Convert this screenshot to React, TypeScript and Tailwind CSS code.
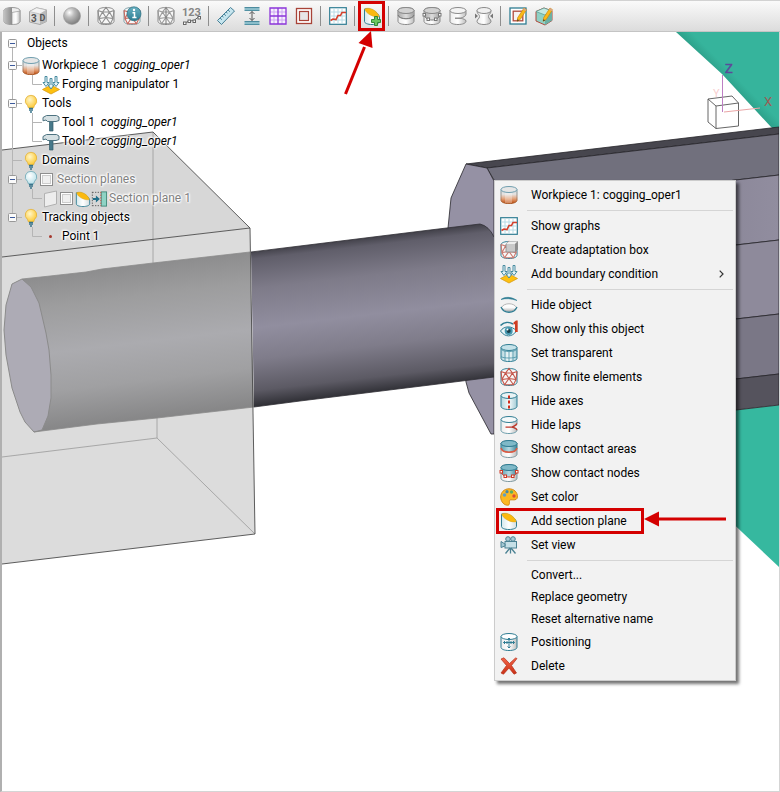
import { Fragment } from "react";
import type { ReactNode } from "react";

const TEAL = "#2f7d93";
const GREY = "#8a8a8a";
const RED = "#c0392b";

/* ---------- Icon building blocks ---------- */

function Can({ stroke = TEAL, fill = "url(#canTeal)", top = "#e9f3f5" }: { stroke?: string; fill?: string; top?: string }) {
  return (
    <>
      <path d="M1 3.500v10.800c0 1.800 3.200 3.200 8 3.200s8-1.400 8-3.200V3.500z" fill={fill} stroke={stroke} />
      <ellipse cx="9" cy="3.500" rx="8" ry="3" fill={top} stroke={stroke} />
    </>
  );
}

function Mesh({ stroke, line }: { stroke: string; line: string }) {
  return (
    <>
      <path d="M1 3.500v10.800c0 1.800 3.200 3.200 8 3.200s8-1.400 8-3.200V3.500C16.500 1.500 13 .5 9 .5s-7.500 1-8 3z" fill="#f7f7f7" stroke={stroke} />
      <path
        d="M1 3.500 5.500 5 9 .5 12.500 5 17 3.500M5.500 5h7L9 10.500zM5.500 5 2 11.500 9 10.500l7 1L12.500 5M2 11.500l2.500 5.200L9 10.500l4.500 6.200L16 11.500M1 3.500l1 8M17 3.500l-1 8M4.500 16.700h9"
        fill="none"
        stroke={line}
        strokeWidth="1.100"
      />
    </>
  );
}

function Section() {
  return (
    <>
      <path d="M1.500 2v12.500c0 1.700 3.200 3 7.500 3s7.500-1.300 7.500-3V10C15.500 6 8 .5 1.500 2z" fill="url(#canSection)" stroke={TEAL} />
      <path d="M1.700 2C7-.8 15 4.500 16.200 9.700 11.500 10.800 3.500 7.500 1.700 2z" fill="#fbb90f" stroke="#d9a520" strokeWidth=".5" />
    </>
  );
}

function Pencil() {
  return (
    <>
      <path d="m15 1 2.500 1.800-6.300 9.700-3 1.800.4-3.500z" fill="#fbb917" stroke="#c98a12" strokeWidth=".7" />
      <path d="m8.300 14.200.2-2 1.500 1z" fill="#222" />
      <path d="m15 1 2.500 1.800-1 1.500L14 2.500z" fill="#d9a58a" />
    </>
  );
}

function Nodes({ color }: { color: string }) {
  return (
    <>
      <path d="M1.500 8c0 2.500 3 5 7.500 5s7.500-2.500 7.500-5" fill="none" stroke={color} />
      <g fill="#fff" stroke={color}>
        <rect x="0" y="6.500" width="2.500" height="2.500" />
        <rect x="15.500" y="6.500" width="2.500" height="2.500" />
        <rect x="4" y="11" width="2.500" height="2.500" />
        <rect x="11.500" y="11" width="2.500" height="2.500" />
      </g>
    </>
  );
}

const lapPath =
  "M1 3.500v10.800c0 1.800 3.200 3.200 8 3.200s8-1.400 8-3.400c0-2-2.800-1.800-5-3 2.200-1 5-1.600 5-4V3.500z";

const ICONS = {
  halfCan: (
    <>
      <Can stroke="#999" fill="url(#canGrey)" top="#eee" />
      <path d="M1 3.500C1.500 1.500 5 .5 9 .5v17c-4.800 0-8-1.400-8-3.200z" fill="url(#canDark)" />
      <path d="M9 5.500 17 4v10.300c0 1.800-3.500 3.200-8 3.200z" fill="url(#canLight)" stroke="#999" strokeWidth=".7" />
    </>
  ),
  cube3d: (
    <>
      <path d="M.5 4.500 7.500.8l10 2.200v11.500L11 17.500.5 15z" fill="#dcdcdc" stroke="#a5a5a5" />
      <path d="m.5 4.500 7-3.700 10 2.200L11 7z" fill="#f3f3f3" stroke="#b0b0b0" strokeWidth=".6" />
      <path d="m11 7 6.500-4v11.500L11 17.500z" fill="#b9b9b9" />
      <text x="2" y="14.500" fontSize="10" fontWeight="700" fill="#555">3</text>
      <text x="10.500" y="14" fontSize="9" fontWeight="700" fill="#555">D</text>
    </>
  ),
  sphere: <circle cx="9" cy="9" r="8.500" fill="url(#ball)" stroke="#999" strokeWidth=".6" />,
  meshGrey: <Mesh stroke={GREY} line="#8f8f8f" />,
  meshInfo: (
    <>
      <Mesh stroke="#7d9fa8" line="#c7685e" />
      <circle cx="11" cy="6.800" r="7" fill="url(#info)" stroke="#286f81" strokeWidth=".7" />
      <path d="M9.500 5.800h2V10M9.300 10.500h4.200" stroke="#fff" strokeWidth="1.500" fill="none" />
      <circle cx="11" cy="3" r="1.200" fill="#fff" />
    </>
  ),
  meshSplit: (
    <>
      <Mesh stroke={GREY} line="#9a9a9a" />
      <path d="M9 .5v17" stroke="#777" fill="none" />
    </>
  ),
  numbers: (
    <>
      <text x="-1" y="8.500" fontSize="11" fontWeight="700" fill="#858585">123</text>
      <path d="m2 16 4-2 5-.5 5-4" fill="none" stroke="#666" />
      <g fill="#fff" stroke="#666">
        <rect x=".5" y="15" width="2.500" height="2.500" />
        <rect x="5" y="13" width="2.500" height="2.500" />
        <rect x="10" y="13" width="2.500" height="2.500" />
        <rect x="15" y="9.500" width="2.500" height="2.500" />
      </g>
    </>
  ),
  ruler: (
    <>
      <path d="M.5 13.500 13.500.5l4 3.500L4.500 17.500z" fill="#c6e5ee" stroke="#457f96" />
      <path d="m3 11 2 1.800M5 9l1.500 1.200M7 7l2 1.800M9 5l1.500 1.200M11 3l2 1.800" stroke="#457f96" strokeWidth=".9" />
    </>
  ),
  distance: (
    <>
      <rect x="1.500" y="0" width="15" height="4" fill="url(#bar)" />
      <rect x="1.500" y="14" width="15" height="4" fill="url(#bar)" />
      <path d="M9 4.500v9M6.500 7 9 4.500 11.500 7M6.500 11 9 13.500l2.500-2.500" fill="none" stroke="#555" />
    </>
  ),
  grid: (
    <>
      <path d="M1 1h16v16H1z" fill="#f6effc" />
      <path d="M5 1v16M13 1v16M1 5h16M1 13h16" stroke="#cda9f2" />
      <path d="M1 1h16v16H1zM9 1v16M1 9h16" fill="none" stroke="#8b35d9" strokeWidth="1.300" />
    </>
  ),
  frame: (
    <>
      <rect x="1.500" y="1.500" width="15" height="15" fill="#fff" stroke="#a84338" strokeWidth="1.300" />
      <rect x="4.500" y="4.500" width="9" height="9" fill="#e7e7e7" stroke="#a84338" strokeWidth="1.200" />
    </>
  ),
  chart: (
    <>
      <rect x=".7" y=".7" width="16.600" height="16.600" fill="#fff" stroke={TEAL} strokeWidth="1.200" />
      <path d="M5 1.500v15M9 1.500v15M13 1.500v15M1.500 5h15M1.500 9h15M1.500 13h15" stroke="#b8dce6" />
      <path d="M1.500 13.500 4 12l3 .5L9 8.500h2.500L13 5.500h4" fill="none" stroke="#d5402b" strokeWidth="1.600" />
    </>
  ),
  section: <Section />,
  sectionAdd: (
    <>
      <Section />
      <path d="M11.500 9.500h3v3h3v3h-3v3h-3v-3h-3v-3h3z" fill="#6cc560" stroke="#26812b" strokeWidth=".9" />
    </>
  ),
  areaGrey: (
    <>
      <Can stroke={GREY} fill="url(#canLight)" />
      <path d="M1 3.500V8c1 5 15 5 16 0V3.500c-1 4-15 4-16 0z" fill="url(#canMid)" stroke="#999" strokeWidth=".6" />
      <ellipse cx="9" cy="3.500" rx="8" ry="3" fill="#d2d2d2" stroke={GREY} />
      <path d="M1 8c1 5 15 5 16 0" fill="none" stroke="#777" />
    </>
  ),
  nodesGrey: (
    <>
      <Can stroke={GREY} fill="url(#canLight)" />
      <path d="M1 3.500V8c1 6 15 6 16 0V3.500c-1 4-15 4-16 0z" fill="url(#canMid)" />
      <ellipse cx="9" cy="3.500" rx="8" ry="3" fill="#d2d2d2" stroke={GREY} />
      <Nodes color="#777" />
    </>
  ),
  lapsGrey: (
    <>
      <path d={lapPath} fill="url(#canLight)" stroke={GREY} />
      <ellipse cx="9" cy="3.500" rx="8" ry="3" fill="#f4f4f4" stroke={GREY} />
      <path d="M6 11.200h6" fill="none" stroke="#777" strokeWidth="1.200" />
    </>
  ),
  squeeze: (
    <>
      <path d="M2 3.500c0 4 2.500 3.500 2.500 6S2 12 2 14.500c0 4 14 4 14 0 0-2.500-2.500-2.500-2.500-5s2.500-2 2.500-6z" fill="url(#canLight)" stroke={GREY} />
      <ellipse cx="9" cy="3.500" rx="7" ry="3" fill="#f0f0f0" stroke={GREY} />
      <path d="M0 6.500 3 9l-3 2.500zM18 6.500 15 9l3 2.500z" fill="#777" />
    </>
  ),
  editFrame: (
    <>
      <rect x="1" y="1" width="16" height="16" fill="#fff" stroke={TEAL} strokeWidth="1.300" />
      <rect x="4.200" y="4.200" width="9.600" height="9.600" fill="#f7f2f1" stroke="#b0493c" strokeWidth="1.300" />
      <Pencil />
    </>
  ),
  editCube: (
    <>
      <path d="m1 4.500 8-3.500 8 3v9.500L10 18l-9-4z" fill="#8fd1c5" stroke="#b0493c" />
      <path d="m1 4.500 9 3.500 7-4-8-3z" fill="#c5e9e2" stroke="#4f9c90" strokeWidth=".7" />
      <path d="m10 8 7-4v9.500L10 18z" fill="#6bb0a5" />
      <Pencil />
    </>
  ),
  workpiece: (
    <>
      <path d="M1 3.500v10.800c0 1.800 3.200 3.200 8 3.200s8-1.400 8-3.200V3.500z" fill="url(#hot)" stroke="url(#hotEdge)" />
      <path d="M5 6v11c3 .5 5 .5 7 0V6z" fill="#fff" opacity=".3" />
      <ellipse cx="9" cy="3.500" rx="8" ry="3" fill="#e6e6e6" stroke="#6f9eae" />
    </>
  ),
  adaptBox: (
    <>
      <Mesh stroke={TEAL} line="#cc7a70" />
      <path d="m6 3 3-2.500h8.500v8L15 11H6z" fill="#c9c9c9" stroke="#888" strokeWidth=".8" />
      <path d="m6 3 3-2.500h8.500L15 3z" fill="#eee" />
      <path d="m15 3 2.500-2.500v8L15 11z" fill="#8e8e8e" />
    </>
  ),
  boundary: (
    <>
      <path d="M9 9 .5 13.500 9 18l8.500-4.500z" fill="#fdc010" stroke="#d99a10" strokeWidth=".8" />
      <path
        d="M3 .5h2v6h2L4 10.500 1 6.500h2zM13 .5h2v6h2l-3 4-3-4h2zM8 2.500h2V9h2l-3 4-3-4h2z"
        fill="#e4f4f8"
        stroke="#3a8299"
        strokeWidth=".9"
      />
    </>
  ),
  eyeClosed: (
    <>
      <path d="M1 3.500C5 .5 11 .5 17 4.500 11 2.500 6 2 1 3.500z" fill={TEAL} stroke={TEAL} strokeWidth=".6" />
      <path d="M1.500 11.500C4 6.500 14 6.500 16.500 11.500c-3 5-12 5-15 0z" fill="url(#lid)" stroke="#a5a5a5" strokeWidth=".8" />
      <path d="M1 11c3 7 13 7 16 0" fill="none" stroke={TEAL} strokeWidth="1.300" />
    </>
  ),
  eyeOnly: (
    <>
      <path d="M.5 5.500C4 2 9 1.500 13 4" fill="none" stroke={TEAL} strokeWidth="1.500" />
      <path d="M.5 11C4 5.500 12 5.500 16.500 11 12 17.500 5 17.500.5 11z" fill="#eaf6f9" stroke={TEAL} />
      <circle cx="8.700" cy="11" r="4" fill="#4496ae" />
      <circle cx="8.700" cy="11" r="2" fill="#173f4b" />
      <circle cx="7.500" cy="9.500" r="1" fill="#fff" />
      <path d="M13.500 2.500 16 .5h1.700V12H15V4l-1.500.8z" fill="#cf3d22" />
    </>
  ),
  transparent: (
    <>
      <Can top="#c5e2e9" />
      <path d="M5 6.200v11M9 6.500v11M13 6.200v11M1 5c2 3.500 14 3.500 16 0M1 12.500c2 2 14 2 16 0" fill="none" stroke="#5298ab" strokeWidth=".9" />
    </>
  ),
  mesh: <Mesh stroke={TEAL} line="#c4574b" />,
  axes: (
    <>
      <Can />
      <path d="M9 3.500v13" stroke="#d02d1c" strokeWidth="2" strokeDasharray="3 2" />
    </>
  ),
  laps: (
    <>
      <path d={lapPath} fill="url(#canLight)" stroke="#6a9caa" />
      <ellipse cx="9" cy="3.500" rx="8" ry="3" fill="#f5f9fa" stroke={TEAL} />
      <path d="M5.500 11.200H12M17 7.500c-.5 2-3 2.700-5 3.600 2.500.8 4.500 1 5 3" fill="none" stroke={RED} strokeWidth="1.300" />
    </>
  ),
  area: (
    <>
      <Can stroke="#7c979e" fill="url(#canLight)" />
      <path d="M1 3.500V8c1 5.500 15 5.500 16 0V3.500c-1 4-15 4-16 0z" fill="url(#contact)" stroke={TEAL} strokeWidth=".6" />
      <ellipse cx="9" cy="3.500" rx="8" ry="3" fill="#7fb9c8" stroke={TEAL} />
      <path d="M1 8c1 5.500 15 5.500 16 0" fill="none" stroke="#dd5a42" strokeWidth="1.500" />
    </>
  ),
  nodes: (
    <>
      <Can stroke="#7c979e" fill="url(#canLight)" />
      <path d="M1 3.500V8c1 6 15 6 16 0V3.500c-1 4-15 4-16 0z" fill="url(#contact)" />
      <ellipse cx="9" cy="3.500" rx="8" ry="3" fill="#7fb9c8" stroke={TEAL} />
      <Nodes color="#cf3a26" />
    </>
  ),
  palette: (
    <>
      <path
        d="M9 .8C4 .8.700 4.500.700 9c0 4.800 3.500 8.200 6.800 8.200 3 0 1.500-3 2-4.700.7-2 7.500 1.500 7.900-3.500C17.700 4.200 14 .8 9 .8z"
        fill="#fbb823"
        stroke="#d28a16"
      />
      <circle cx="4.500" cy="7" r="1.800" fill="#5e9fc9" />
      <circle cx="7" cy="3.700" r="1.600" fill="#4587a8" />
      <circle cx="11.500" cy="4" r="1.700" fill="#5aae60" />
      <circle cx="14" cy="8" r="1.700" fill="#dd4c35" />
    </>
  ),
  camera: (
    <>
      <circle cx="8" cy="3" r="2.300" fill="#a7cbd6" stroke="#4b8293" />
      <circle cx="13" cy="3" r="2.300" fill="#a7cbd6" stroke="#4b8293" />
      <rect x="5" y="5.500" width="11.500" height="6.500" fill="#c6e0e7" stroke="#4b8293" />
      <path d="M5 8 1 5.500v6L5 10z" fill="#a3c7d2" stroke="#4b8293" />
      <path d="M10.500 12v5.500M10 12l-4.500 5.500M11 12l4.500 5.500" stroke="#4b8293" strokeWidth="1.300" />
    </>
  ),
  position: (
    <>
      <Can fill="url(#canLight)" top="#fff" />
      <path
        d="M9 5v10M3.500 9.500h11M7.500 6.500 9 5l1.500 1.500M7.500 13.500 9 15l1.500-1.500M5 8l-1.500 1.500L5 11M13 8l1.500 1.500L13 11M7 8v3M11 8v3"
        fill="none"
        stroke={TEAL}
      />
    </>
  ),
  remove: (
    <path d="M1 2 4 .8 9.500 6.500 15.500 1l1.500.5-5.500 7 5 7.500-2.500 1.200L9 11l-5.500 6.200L1 16l5.500-7.500z" fill="url(#del)" stroke="#b3301b" strokeWidth=".7" />
  ),
  bulb: (
    <>
      <path d="M9 .3a5.600 5.600 0 0 0-3.600 10L6.500 13h5l1.100-2.700A5.600 5.600 0 0 0 9 .3z" fill="url(#bulbOn)" stroke="#e0ac30" strokeWidth=".7" />
      <path d="M7 13.500h4M7 15.200h4M8 17h2" stroke="#39748b" strokeWidth="1.300" />
    </>
  ),
  bulbOff: (
    <>
      <path d="M9 .3a5.600 5.600 0 0 0-3.600 10L6.500 13h5l1.100-2.700A5.600 5.600 0 0 0 9 .3z" fill="url(#bulbOff)" stroke="#6ba5b3" strokeWidth=".8" />
      <path d="M7 13.500h4M7 15.200h4M8 17h2" stroke="#39748b" strokeWidth="1.300" />
    </>
  ),
  hammer: (
    <>
      <path d="M7.500 6h3.500v11H7.500z" fill="#47798a" stroke="#345d6a" strokeWidth=".7" />
      <path d="M1 3.500 4.500 1.500h10L17 3v3.500l-3 1H5.500L4 6l-3 .8z" fill="#d5e0e3" stroke="#4d7280" />
    </>
  ),
  plane: <path d="M2.500 3.500 14.500 1v13l-12 3z" fill="#ededed" stroke="#b1b1b1" />,
  sectionSide: (
    <>
      <path d="M1.500 1.500h9M1.500 16.500h9M1.500 1v16" stroke="#555" strokeDasharray="1.500 1.500" />
      <rect x="11.500" y="1" width="6" height="16" fill="#8ed3c4" stroke="#3f8878" />
      <path d="M11 1v16" stroke="#c54a3c" strokeDasharray="1.500 1.500" />
      <path d="M2 8h3.500V5l4.500 4-4.500 4v-3H2z" fill="#22708a" />
    </>
  ),
};

type IconName = keyof typeof ICONS;

function Icon({ name, className = "size-[18px]" }: { name: IconName; className?: string }) {
  return (
    <svg viewBox="0 0 18 18" className={`${className} shrink-0 overflow-visible`} aria-hidden="true">
      {ICONS[name]}
    </svg>
  );
}

function Gradient({ id, stops, flat }: { id: string; stops: string[]; flat?: boolean }) {
  return (
    <linearGradient id={id} x1="0" y1="0" x2={flat ? 1 : 0} y2={flat ? 0 : 1}>
      {stops.map((color, i) => (
        <stop key={i} offset={i / (stops.length - 1)} stopColor={color} />
      ))}
    </linearGradient>
  );
}

// Shared by every icon on the page
function IconGradients() {
  return (
    <svg className="absolute size-0" aria-hidden="true">
      <defs>
        <Gradient id="canTeal" flat stops={["#b5d6de", "#f4fafb", "#a3cbd5"]} />
        <Gradient id="canSection" flat stops={["#d5e8ec", "#fff", "#d3dde0"]} />
        <Gradient id="canGrey" flat stops={["#999", "#e8e8e8", "#aaa"]} />
        <Gradient id="canMid" flat stops={["#a9a9a9", "#dcdcdc", "#a0a0a0"]} />
        <Gradient id="canDark" flat stops={["#c2c2c2", "#8c8c8c"]} />
        <Gradient id="canLight" flat stops={["#ececec", "#fff", "#bdbdbd"]} />
        <Gradient id="lid" stops={["#fff", "#fafafa", "#bbb"]} />
        <Gradient id="bar" stops={["#2e7389", "#a9d5df", "#347b90"]} />
        <Gradient id="contact" flat stops={["#5ba0b2", "#b4dae3", "#3d8397"]} />
        <Gradient id="hot" stops={["#d5d5d5", "#e4e4e4", "#e3a077", "#bd4b0b"]} />
        <Gradient id="hotEdge" stops={["#6f9eae", "#a98d7c", "#a44b14"]} />
        <Gradient id="del" stops={["#f4654a", "#c92f14"]} />
        <Gradient id="info" stops={["#6bb2c3", "#2c7c91"]} />
        <radialGradient id="ball" cx=".35" cy=".3" r=".7">
          <stop offset="0" stopColor="#fff" />
          <stop offset=".4" stopColor="#bdbdbd" />
          <stop offset="1" stopColor="#808080" />
        </radialGradient>
        <radialGradient id="bulbOn" cx=".4" cy=".35" r=".7">
          <stop offset="0" stopColor="#fff6c9" />
          <stop offset="1" stopColor="#fcc62b" />
        </radialGradient>
        <radialGradient id="bulbOff" cx=".4" cy=".35" r=".7">
          <stop offset="0" stopColor="#fff" />
          <stop offset="1" stopColor="#b5dfe8" />
        </radialGradient>
      </defs>
    </svg>
  );
}

/* ---------- Toolbar ---------- */

const toolGroups: { name: IconName; label: string }[][] = [
  [
    { name: "halfCan", label: "Half section" },
    { name: "cube3d", label: "3D view" },
  ],
  [{ name: "sphere", label: "Shading" }],
  [
    { name: "meshGrey", label: "Mesh" },
    { name: "meshInfo", label: "Mesh info" },
  ],
  [
    { name: "meshSplit", label: "Mesh symmetry" },
    { name: "numbers", label: "Node numbers" },
  ],
  [
    { name: "ruler", label: "Ruler" },
    { name: "distance", label: "Distance" },
    { name: "grid", label: "Grid" },
    { name: "frame", label: "Frame" },
  ],
  [{ name: "chart", label: "Graphs" }],
  [{ name: "sectionAdd", label: "Add section plane" }],
  [
    { name: "areaGrey", label: "Contact areas" },
    { name: "nodesGrey", label: "Contact nodes" },
    { name: "lapsGrey", label: "Laps" },
    { name: "squeeze", label: "Squeeze" },
  ],
  [
    { name: "editFrame", label: "Edit frame" },
    { name: "editCube", label: "Edit box" },
  ],
];

function Toolbar() {
  return (
    <header className="flex h-8 items-center border-y border-t-[#d2d2d2] border-b-[#c4c4c4] bg-linear-to-b from-[#fafafa] to-[#dcdcdc]">
      {toolGroups.map((group, i) => (
        <Fragment key={i}>
          {i > 0 && (
            <div className="flex w-2 pl-[2px]">
              <div className="h-5 w-px bg-[#8e8e8e]" />
            </div>
          )}
          {group.map((tool) => (
            <button key={tool.name} type="button" aria-label={tool.label} className="relative flex h-[30px] w-[26px] items-center pl-[3px]">
              <Icon name={tool.name} />
              {tool.name === "sectionAdd" && <ToolbarCallout />}
            </button>
          ))}
        </Fragment>
      ))}
    </header>
  );
}

function ToolbarCallout() {
  return (
    <>
      <span className="pointer-events-none absolute top-0 -left-[2px] z-20 h-[30px] w-[27px] border-3 border-[#d40000]" />
      <svg viewBox="0 0 30 66" className="pointer-events-none absolute top-[30px] -left-4 z-20 h-[66px] w-[30px]" aria-hidden="true">
        <path d="m1.500 63 19-47" stroke="#d40000" strokeWidth="3" />
        <path d="m27 0 1.500 17-14-5z" fill="#d40000" />
      </svg>
    </>
  );
}

/* ---------- 3D view ---------- */

function Scene() {
  return (
    <svg viewBox="2 32 777 759" preserveAspectRatio="xMinYMin slice" className="absolute inset-0 size-full" aria-hidden="true">
      <defs>
        <linearGradient id="rod" gradientUnits="userSpaceOnUse" x1="370" y1="236" x2="388" y2="391">
          <stop offset="0" stopColor="#3e3d45" />
          <stop offset=".06" stopColor="#605e6a" />
          <stop offset=".25" stopColor="#7e7b89" />
          <stop offset=".5" stopColor="#918e9f" />
          <stop offset=".7" stopColor="#7f7c8a" />
          <stop offset=".9" stopColor="#5c5a64" />
          <stop offset="1" stopColor="#303036" />
        </linearGradient>
        <linearGradient id="rodInBox" gradientUnits="userSpaceOnUse" x1="130" y1="266" x2="148" y2="419">
          <stop offset="0" stopColor="#8d8d8e" />
          <stop offset=".2" stopColor="#9d9d9e" />
          <stop offset=".5" stopColor="#ababaf" />
          <stop offset=".75" stopColor="#a0a0a2" />
          <stop offset="1" stopColor="#868687" />
        </linearGradient>
        <linearGradient id="teal" gradientUnits="userSpaceOnUse" x1="719" y1="80" x2="729" y2="70">
          <stop offset="0" stopColor="#2a9a84" />
          <stop offset="1" stopColor="#36b49c" />
        </linearGradient>
        <linearGradient id="facet" x1="0" x2="1">
          <stop offset="0" stopColor="#777584" />
          <stop offset="1" stopColor="#918d9f" />
        </linearGradient>
      </defs>

      {/* Die */}
      <path d="M676 32h103v101l-8-6-49-53z" fill="url(#teal)" />
      <path d="m690 415 89-10v162l-89-84z" fill="#36b89f" />

      {/* Forged end of the workpiece */}
      <g stroke="#26252a" strokeWidth=".8">
        <path d="m466 164 313-37v7l-292 34z" fill="#47464e" />
        <path d="m487 168 292-34v41l-250 29-35-24z" fill="#71707d" />
        <path d="m529 204 250-29v65l-250 29z" fill="url(#facet)" />
        <path d="m529 269 250-29v74l-250 29z" fill="#8e8a9b" />
        <path d="m529 343 250-29v60l-250 29z" fill="#7a7786" />
        <path d="m529 403 250-29v31l-250 29z" fill="#55535d" />
        <path d="m466 164 21 4 7 13v253h-3l-22-41-3-11-18-154 3-30z" fill="#9591a4" />
      </g>

      {/* Round bar */}
      <path d="m251 252 49-6 130-16 50-6q9 2 14 13v140l-64 8-130 16-46 6z" fill="url(#rod)" />
      <path d="m251 252 49-6 130-16 50-6q9 2 14 13M494 377l-64 8-130 16-46 6" fill="none" stroke="#302f35" strokeWidth=".8" />

      {/* Transparent box */}
      <path d="m2 150 151-18 97 96-248 29z" fill="#d7d7d7" />
      <path d="m2 257 248-29 5 306-253 30z" fill="#dcdcdc" />
      <path d="M153 132v131M157 415v23M2 457l155-19 98 96" fill="none" stroke="#999" strokeWidth=".8" />
      <path d="m22 279 28-3 36-4 16-3 51-6 97-11 4 155-97 11-60 6-63 8z" fill="url(#rodInBox)" />
      <path
        d="m22 279-10 5-6 21-2 25 2 25 6 33 8 24 5 10 9 10 8-2 6-14 3-18v-23l-2-25-3-17-7-30-8-16z"
        fill="#adabb5"
        stroke="#8b8b8b"
      />
      <path d="m22 279 28-3 36-4 16-3 51-6 97-11M34 432l63-8 60-6 97-11" fill="none" stroke="#8c8c8c" strokeWidth=".8" />
      <path d="m2 150 151-18 97 96-248 29M250 228l5 306-253 30" fill="none" stroke="#4c4c4c" strokeWidth=".9" />

      {/* View cube */}
      <path d="m716 106 22.500-3v23l-22.500 2.500zM716 106l-8-7 24-3 6.500 7M708 99v23l8 6.500" fill="none" stroke="#555" strokeWidth=".9" />
      <path d="M722.500 75v37" stroke="#bd7fc4" />
      <path d="m724 112 36-4" stroke="#eaa6a6" />
      <g fontSize="13">
        <text x="725" y="73" fill="#5b4a9a" stroke="#5b4a9a" strokeWidth=".4">Z</text>
        <text x="764" y="106" fill="#9a5f57">X</text>
        <text x="713" y="97" fontSize="11" fill="#f8cfcf">Y</text>
      </g>
    </svg>
  );
}

/* ---------- Object tree ---------- */

const halo = "[text-shadow:0_0_2px_#fff,0_0_2px_#fff,0_0_3px_#fff,1px_1px_2px_#fff,-1px_-1px_2px_#fff]";

interface TreeRowProps {
  label: string;
  note?: string;
  child?: boolean;
  toggle?: boolean;
  first?: boolean;
  last?: boolean;
  tail?: boolean;
  muted?: boolean;
  children?: ReactNode;
}

function TreeRow({ label, note, child, toggle, first, last, tail, muted, children }: TreeRowProps) {
  return (
    <li className={`flex h-[19px] items-center ${first ? "mb-[3px]" : ""}`}>
      <svg viewBox="0 0 20 19" className="h-[19px] w-5 shrink-0 overflow-visible" aria-hidden="true">
        {!tail && <path d={last ? "M10.500 0v10" : first ? "M10.500 9v13" : "M10.500 0v19"} stroke="#b5b5b5" />}
        {!child && !first && <path d="M10.500 9.500H20" stroke="#b5b5b5" />}
        {toggle && (
          <>
            <rect x="6.500" y="5.500" width="8" height="8" rx="1" fill="#fafafa" stroke="#989898" />
            <path d="M8 9.500h5" stroke="#3c5a9c" />
          </>
        )}
      </svg>
      {child && (
        <svg viewBox="0 0 20 19" className="h-[19px] w-5 shrink-0" aria-hidden="true">
          <path d={label === "Tool 1" ? "M10.500 0v19M10.500 9.500H20" : "M10.500 0v9.500H20"} fill="none" stroke="#b5b5b5" />
        </svg>
      )}
      {children}
      <span className={`whitespace-pre ${halo} ${muted ? "text-[#808080]" : "text-black"}`}>
        {label}
        {note && <i>{"  " + note}</i>}
      </span>
    </li>
  );
}

function TreeIcon({ name }: { name: IconName }) {
  return (
    <span className="flex w-5 shrink-0">
      <Icon name={name} />
    </span>
  );
}

function TreeCheck({ label }: { label: string }) {
  return (
    <input
      type="checkbox"
      aria-label={label}
      className="size-[13px] shrink-0 appearance-none border border-[#8e8e8e] bg-[#f0f0f0] shadow-[inset_0_0_0_1px_#fff,inset_0_0_0_2px_#ccc]"
    />
  );
}

function ObjectTree() {
  return (
    <ul className="relative pt-[2px]">
      <TreeRow label="Objects" toggle first>
        <span className="w-[5px]" />
      </TreeRow>
      <TreeRow label="Workpiece 1" note="cogging_oper1" toggle>
        <TreeIcon name="workpiece" />
      </TreeRow>
      <TreeRow label="Forging manipulator 1" child>
        <TreeIcon name="boundary" />
      </TreeRow>
      <TreeRow label="Tools" toggle>
        <TreeIcon name="bulb" />
      </TreeRow>
      <TreeRow label="Tool 1" note="cogging_oper1" child>
        <TreeIcon name="hammer" />
      </TreeRow>
      <TreeRow label="Tool 2" note="cogging_oper1" child>
        <TreeIcon name="hammer" />
      </TreeRow>
      <TreeRow label="Domains">
        <TreeIcon name="bulb" />
      </TreeRow>
      <TreeRow label="Section planes" toggle muted>
        <span className="flex items-center pr-1">
          <Icon name="bulbOff" />
          <TreeCheck label="Section planes" />
        </span>
      </TreeRow>
      <TreeRow label="Section plane 1" child muted>
        <span className="flex items-center pr-[2px]">
          <Icon name="plane" />
          <TreeCheck label="Section plane 1" />
          <span className="flex pl-[2px]">
            <Icon name="section" className="size-4" />
            <Icon name="sectionSide" className="size-4" />
          </span>
        </span>
      </TreeRow>
      <TreeRow label="Tracking objects" toggle last>
        <TreeIcon name="bulb" />
      </TreeRow>
      <TreeRow label="Point 1" child tail>
        <span className="flex w-5 pl-[7px]">
          <span className="size-[3px] rounded-full bg-[#a5382e]" />
        </span>
      </TreeRow>
    </ul>
  );
}

/* ---------- Context menu ---------- */

const menuSections: { icon?: IconName; label: string; submenu?: boolean; marked?: boolean }[][] = [
  [{ icon: "workpiece", label: "Workpiece 1: cogging_oper1" }],
  [
    { icon: "chart", label: "Show graphs" },
    { icon: "adaptBox", label: "Create adaptation box" },
    { icon: "boundary", label: "Add boundary condition", submenu: true },
  ],
  [
    { icon: "eyeClosed", label: "Hide object" },
    { icon: "eyeOnly", label: "Show only this object" },
    { icon: "transparent", label: "Set transparent" },
    { icon: "mesh", label: "Show finite elements" },
    { icon: "axes", label: "Hide axes" },
    { icon: "laps", label: "Hide laps" },
    { icon: "area", label: "Show contact areas" },
    { icon: "nodes", label: "Show contact nodes" },
    { icon: "palette", label: "Set color" },
    { icon: "section", label: "Add section plane", marked: true },
    { icon: "camera", label: "Set view" },
  ],
  [
    { label: "Convert..." },
    { label: "Replace geometry" },
    { label: "Reset alternative name" },
    { icon: "position", label: "Positioning" },
    { icon: "remove", label: "Delete" },
  ],
];

function ContextMenu() {
  return (
    <div
      role="menu"
      className="absolute top-[148px] left-[492px] z-10 w-[242px] border border-[#ccc] bg-[#f2f2f2] py-[2px] shadow-[3px_3px_3px_rgba(0,0,0,0.55)]"
    >
      {menuSections.map((section, i) => (
        <Fragment key={i}>
          {i > 0 && <hr className="my-[3px] mr-[2px] ml-8 border-[#d5d5d5]" />}
          {section.map((item) => (
            <button
              key={item.label}
              type="button"
              role="menuitem"
              className={`relative flex w-full items-center text-left ${item.icon ? "h-6" : "h-[22px]"}`}
            >
              <span className="flex w-9 shrink-0 pl-[5px]">{item.icon && <Icon name={item.icon} />}</span>
              {item.label}
              {item.submenu && (
                <svg viewBox="0 0 5 8" className="mr-[11px] ml-auto h-2 w-[5px]" aria-hidden="true">
                  <path d="m.7.7 3.300 3.300L.7 7.300" fill="none" stroke="#333" strokeWidth="1.200" />
                </svg>
              )}
              {item.marked && <MenuCallout />}
            </button>
          ))}
        </Fragment>
      ))}
    </div>
  );
}

function MenuCallout() {
  return (
    <>
      <span className="pointer-events-none absolute -top-px left-px h-[26px] w-[148px] border-3 border-[#d40000]" />
      <svg viewBox="0 0 82 16" className="pointer-events-none absolute top-[2px] left-[149px] h-4 w-[82px]" aria-hidden="true">
        <path d="M12 8h70" stroke="#d40000" strokeWidth="3" />
        <path d="m0 8 15-7.500v15z" fill="#d40000" />
      </svg>
    </>
  );
}

export default function App() {
  return (
    <div className="flex min-h-screen flex-col bg-white font-[Roboto,'Open_Sans',sans-serif] text-[12px] leading-[19px] text-black">
      <IconGradients />
      <Toolbar />
      <main className="relative min-h-[660px] flex-1 border-r border-b border-l-2 border-r-[#d5d5d5] border-b-[#d5d5d5] border-l-[#b0b0b0]">
        <Scene />
        <ObjectTree />
        <ContextMenu />
      </main>
    </div>
  );
}
